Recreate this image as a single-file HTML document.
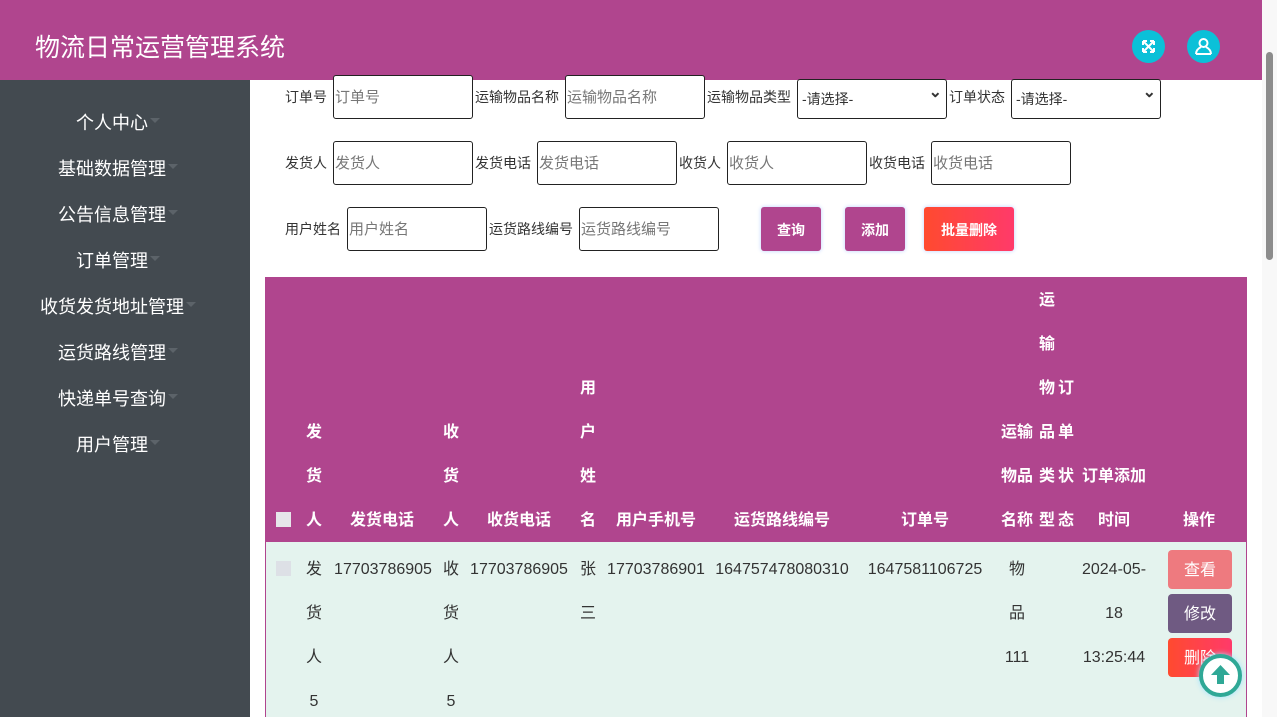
<!DOCTYPE html>
<html><head><meta charset="utf-8">
<style>
*{margin:0;padding:0;box-sizing:border-box}
body{width:1277px;height:717px;overflow:hidden;position:relative;background:#fff;font-family:"Liberation Sans","Noto Sans CJK SC",sans-serif;}
.top{position:absolute;left:0;top:0;width:1262px;height:80px;background:#b0458e;}
.title{position:absolute;left:35px;top:31px;font-size:25px;color:#fff;line-height:34px;}
.ic{position:absolute;top:30px;width:33px;height:33px;border-radius:50%;background:#0bc0d8;}
.side{position:absolute;left:0;top:80px;width:250px;height:637px;background:#434a50;}
.mi{position:absolute;left:0;width:236px;text-align:center;color:#fff;font-size:18px;line-height:24px;}
.mi:after{content:"";display:inline-block;border:5px solid transparent;border-top:5px solid #5c6369;margin-left:2px;vertical-align:1px;}
.lab{position:absolute;font-size:14px;color:#333;line-height:18px;}
.inp{position:absolute;height:44px;border:1px solid #222;border-radius:3px;background:#fff;font-size:15px;color:#777;padding-left:1px;line-height:44px;}
.sel{position:absolute;height:40px;border:1px solid #222;border-radius:3px;background:#fff;font-size:14px;color:#333;padding-left:4px;line-height:38px;}
.sel:after{content:"⌄";position:absolute;right:4px;top:-6px;font-size:16px;font-weight:bold;}
.btn{position:absolute;top:207px;height:44px;border-radius:3px;color:#fff;font-size:14px;text-align:center;line-height:46px;box-shadow:0 0 4px #bcd0ff;font-weight:bold;}
.thead{position:absolute;left:265px;top:277px;width:982px;height:265px;background:#b0458e;}
.tbody{position:absolute;left:265px;top:542px;width:982px;height:175px;background:#e4f3ee;border-left:1px solid #b0458e;border-right:1px solid #b0458e;}
.h,.d{position:absolute;width:140px;text-align:center;line-height:44px;font-size:16px;}
.h{color:#fff;font-weight:bold;}
.d{color:#333;}
.cb{position:absolute;left:276px;width:15px;height:15px;background:#dde0e6;}
.ob{position:absolute;left:1168px;width:64px;height:39px;border-radius:4px;color:#fff;font-size:16px;text-align:center;line-height:41px;}
</style></head><body>
<div class="top"></div>
<div class="title">物流日常运营管理系统</div>
<div class="ic" style="left:1132px"><svg width="33" height="33" viewBox="0 0 33 33" fill="none" stroke="#fff" stroke-width="2"><path d="M11 11l11 11M22 11L11 22M11 11h4M11 11v4M22 11h-4M22 11v4M11 22h4M11 22v-4M22 22h-4M22 22v-4"/></svg></div>
<div class="ic" style="left:1187px"><svg width="33" height="33" viewBox="0 0 33 33" fill="none" stroke="#fff" stroke-width="2"><circle cx="16.5" cy="13" r="4"/><path d="M9 24c0-4 3-6 5-7M24 24c0-4-3-6-5-7M9 24h15"/></svg></div>
<div style="position:absolute;left:1262px;top:0;width:15px;height:717px;background:#f8f8f8"></div>
<div style="position:absolute;left:1266px;top:52px;width:7px;height:208px;background:#8c8c8c;border-radius:4px"></div>

<div class="side"></div>
<div class="mi" style="top:111px">个人中心</div>
<div class="mi" style="top:157px">基础数据管理</div>
<div class="mi" style="top:203px">公告信息管理</div>
<div class="mi" style="top:249px">订单管理</div>
<div class="mi" style="top:295px">收货发货地址管理</div>
<div class="mi" style="top:341px">运货路线管理</div>
<div class="mi" style="top:387px">快递单号查询</div>
<div class="mi" style="top:433px">用户管理</div>

<div class="lab" style="left:285px;top:88px">订单号</div>
<div class="inp" style="left:333px;top:75px;width:140px">订单号</div>
<div class="lab" style="left:475px;top:88px">运输物品名称</div>
<div class="inp" style="left:565px;top:75px;width:140px">运输物品名称</div>
<div class="lab" style="left:707px;top:88px">运输物品类型</div>
<div class="sel" style="left:797px;top:79px;width:150px">-请选择-</div>
<div class="lab" style="left:949px;top:88px">订单状态</div>
<div class="sel" style="left:1011px;top:79px;width:150px">-请选择-</div>

<div class="lab" style="left:285px;top:154px">发货人</div>
<div class="inp" style="left:333px;top:141px;width:140px">发货人</div>
<div class="lab" style="left:475px;top:154px">发货电话</div>
<div class="inp" style="left:537px;top:141px;width:140px">发货电话</div>
<div class="lab" style="left:679px;top:154px">收货人</div>
<div class="inp" style="left:727px;top:141px;width:140px">收货人</div>
<div class="lab" style="left:869px;top:154px">收货电话</div>
<div class="inp" style="left:931px;top:141px;width:140px">收货电话</div>

<div class="lab" style="left:285px;top:220px">用户姓名</div>
<div class="inp" style="left:347px;top:207px;width:140px">用户姓名</div>
<div class="lab" style="left:489px;top:220px">运货路线编号</div>
<div class="inp" style="left:579px;top:207px;width:140px">运货路线编号</div>
<div class="btn" style="left:761px;width:60px;background:#b0458e">查询</div>
<div class="btn" style="left:845px;width:60px;background:#b0458e">添加</div>
<div class="btn" style="left:924px;width:90px;background:linear-gradient(90deg,#ff4a2f,#ff3a6a)">批量删除</div>

<div class="thead"></div>
<div class="tbody"></div>
<div class="cb" style="top:512px;background:#e6e6ea"></div>
<div class="cb" style="top:561px"></div>

<div class="h" style="left:244px;top:411px">发<br>货<br>人</div>
<div class="h" style="left:312px;top:499px">发货电话</div>
<div class="h" style="left:381px;top:411px">收<br>货<br>人</div>
<div class="h" style="left:449px;top:499px">收货电话</div>
<div class="h" style="left:518px;top:367px">用<br>户<br>姓<br>名</div>
<div class="h" style="left:586px;top:499px">用户手机号</div>
<div class="h" style="left:712px;top:499px">运货路线编号</div>
<div class="h" style="left:855px;top:499px">订单号</div>
<div class="h" style="left:947px;top:411px">运输<br>物品<br>名称</div>
<div class="h" style="left:977px;top:279px">运<br>输<br>物<br>品<br>类<br>型</div>
<div class="h" style="left:996px;top:367px">订<br>单<br>状<br>态</div>
<div class="h" style="left:1044px;top:455px">订单添加<br>时间</div>
<div class="h" style="left:1129px;top:499px">操作</div>

<div class="d" style="left:244px;top:548px">发<br>货<br>人<br>5</div>
<div class="d" style="left:313px;top:548px">17703786905</div>
<div class="d" style="left:381px;top:548px">收<br>货<br>人<br>5</div>
<div class="d" style="left:449px;top:548px">17703786905</div>
<div class="d" style="left:518px;top:548px">张<br>三</div>
<div class="d" style="left:586px;top:548px">17703786901</div>
<div class="d" style="left:712px;top:548px">164757478080310</div>
<div class="d" style="left:855px;top:548px">1647581106725</div>
<div class="d" style="left:947px;top:548px">物<br>品<br>111</div>
<div class="d" style="left:1044px;top:548px">2024-05-<br>18<br>13:25:44</div>

<div class="ob" style="top:550px;background:#ee7a7f">查看</div>
<div class="ob" style="top:594px;background:#6f5a82">修改</div>
<div class="ob" style="top:638px;background:linear-gradient(90deg,#ff4a2f,#ff3a6a)">删除</div>
<div style="position:absolute;left:1199px;top:654px;width:43px;height:43px;border-radius:50%;background:#fff;border:4px solid #2fa896;box-shadow:0 0 6px #9fe3ff">
<svg width="35" height="35" viewBox="0 0 35 35"><path d="M17.5 7L8 17h6v9h7v-9h6z" fill="#2fa896"/></svg></div>
</body></html>
